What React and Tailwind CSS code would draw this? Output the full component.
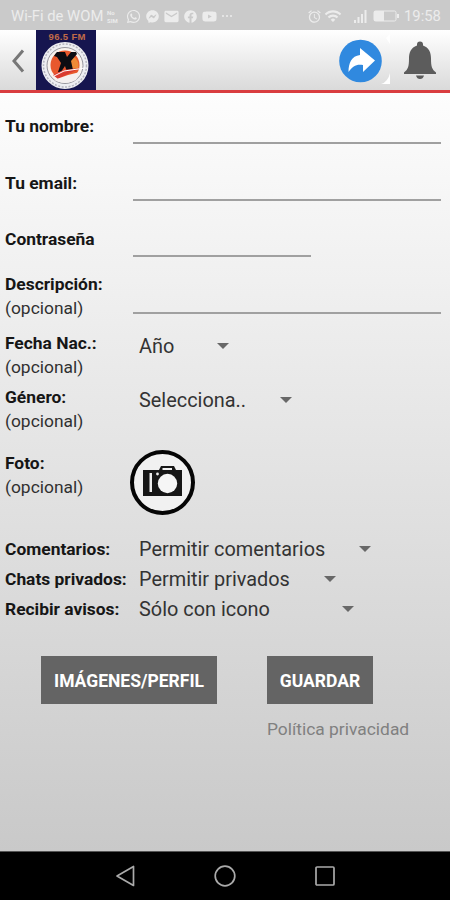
import { FaWhatsapp, FaFacebookMessenger, FaFacebook, FaYoutube } from "react-icons/fa";
import { MdEmail, MdAlarm, MdWifi } from "react-icons/md";

function StatusBar() {
  return (
    <div className="flex h-[30px] items-center bg-[#cacaca] pt-[2px] pl-[11px] pr-[9px] text-[#ececec]">
      <span className="w-[95px] whitespace-nowrap text-[14.8px]">Wi-Fi de WOM</span>
      <span className="flex w-[18px] flex-col gap-px pl-px text-[6px] leading-[7px] font-bold">
        <span>No</span>
        <span>SIM</span>
      </span>
      <div className="ml-[2px] flex items-center">
        <FaWhatsapp size={15} />
        <FaFacebookMessenger size={13} className="ml-[5px]" />
        <MdEmail size={17} className="ml-[4px]" />
        <FaFacebook size={13} className="ml-[4px]" />
        <FaYoutube size={15} className="ml-[5px]" />
      </div>
      <svg width="12" height="4" viewBox="0 0 12 4" className="ml-[4px]" fill="currentColor">
        <circle cx="2" cy="2" r="1" />
        <circle cx="6" cy="2" r="1" />
        <circle cx="10" cy="2" r="1" />
      </svg>
      <div className="ml-auto flex items-center">
        <MdAlarm size={15} />
        <MdWifi size={18} className="ml-[2px]" />
        <svg width="14" height="14" viewBox="0 0 14 14" className="ml-[12px]" fill="currentColor">
          <path d="M0 11h2v3H0zM3.5 8h2v6h-2zM7 5h2v9H7zM10.5 1h2v13h-2z" />
        </svg>
        <svg width="27" height="12" viewBox="0 0 27 12" className="ml-[5px]">
          <rect x="1" y="1" width="22" height="10" rx="1.5" fill="none" stroke="currentColor" strokeWidth="1" />
          <rect x="1" y="1" width="10" height="10" fill="currentColor" />
          <rect x="24" y="4" width="2" height="4" fill="currentColor" />
        </svg>
        <span className="ml-[4px] w-[37px] whitespace-nowrap text-[14.8px]">19:58</span>
      </div>
    </div>
  );
}

function StationLogo() {
  return (
    <svg width="60" height="60" viewBox="0 0 60 60" className="ml-[11px]">
      <rect width="60" height="60" fill="#16154f" />
      <text x="31" y="10" textAnchor="middle" fontSize="9.5" fontWeight="700" fill="#c06a48" textLength="37" fontFamily="Liberation Sans, sans-serif">96.5 FM</text>
      <circle cx="29" cy="35.500" r="23.500" fill="#eeeef2" />
      <circle cx="29" cy="35.500" r="21.500" fill="none" stroke="#b4b4be" strokeWidth="1.500" strokeDasharray="2 1.500" />
      <circle cx="29" cy="35.500" r="18" fill="#f8f3ef" stroke="#6e6e7a" strokeWidth="0.700" />
      <circle cx="29" cy="35" r="14.500" fill="#e8582d" />
      <path d="M33 26c7 0 11 6 9 13l-9-1z" fill="#ef8a37" />
      <path d="M21 22h8l2 5 4-5h5l1 2-6 7 2 9-6 2-2-6-4 6h-3l3-9-4-6-3-1 2-3z" fill="#0c0c12" />
      <path d="M17 45l10-5 18-2-11 5-12 6z" fill="#d93a31" />
      <path d="M18 46l10-5 21-3" fill="none" stroke="#fff" strokeWidth="1" />
      <path d="M18 50q11 6 22 0l4-8-12 3z" fill="#f5f0f0" />
    </svg>
  );
}

function Header() {
  return (
    <header className="flex h-[63px] items-start border-b-[3px] border-[#d93d3f] bg-linear-to-b from-white to-[#dadada]">
      <svg width="14" height="60" viewBox="0 0 14 60" className="ml-[11px]" fill="none" stroke="#777" strokeWidth="3">
        <path d="M12 20.500L3 31l9 10.500" />
      </svg>
      <StationLogo />
      <div className="ml-auto flex">
        <svg width="52" height="60" viewBox="0 0 52 60">
          <circle cx="21.500" cy="31" r="21.300" fill="#3089df" />
          <path d="M21 18l15 12.500-12 11.500v-7c-7-1-10 1-14.500 7 0-9 3-16 11.500-17z" fill="#fff" />
          <path d="M51 43v11h-9q7-2 9-11zM51 4v10l-4-6z" fill="#fff" />
        </svg>
        <svg width="34" height="60" viewBox="0 0 34 60" className="mr-[13px] ml-[12px]" fill="#5c5c5c">
          <path d="M17 11.500a3 3 0 0 1 3 3v1c6 2 8 7 8 13 0 8 1 11 5 14v1.500H1v-1.500c4-3 5-6 5-14 0-6 2-11 8-13v-1a3 3 0 0 1 3-3z" />
          <path d="M13 45.500h8q-1 3.500-4 3.500t-4-3.500z" />
        </svg>
      </div>
    </header>
  );
}

function Label({ text, optional }) {
  return (
    <div className="w-[128px] shrink-0 pl-[5px] text-[17.4px] leading-[24px] text-[#161616]">
      <div className="font-bold whitespace-nowrap">{text}</div>
      {optional && <div className="text-[#303030]">(opcional)</div>}
    </div>
  );
}

function Field({ label, optional, rowClass, lineClass }) {
  return (
    <div className={"flex " + rowClass}>
      <Label text={label} optional={optional} />
      <input className={"ml-[5px] border-b-2 border-[#a0a0a0] bg-transparent outline-none " + lineClass} />
    </div>
  );
}

function Picker({ value, widthClass }) {
  return (
    <div className={"ml-[11px] flex h-[30px] items-center justify-between text-[19.9px] text-[#333] " + widthClass}>
      <span className="pt-[2px] whitespace-nowrap">{value}</span>
      <svg width="12" height="6" viewBox="0 0 12 6" fill="#686868">
        <path d="M0 0h12L6 6z" />
      </svg>
    </div>
  );
}

function NavigationBar() {
  return (
    <nav className="flex h-[49px] items-center justify-between border-t border-[#555] bg-black pr-[114px] pl-[115px]">
      <svg width="20" height="22" viewBox="0 0 20 22" fill="none" stroke="#aaa" strokeWidth="1.700" strokeLinejoin="round">
        <path d="M18.500 1.500v19L2 11z" />
      </svg>
      <svg width="22" height="22" viewBox="0 0 22 22" fill="none" stroke="#aaa" strokeWidth="1.700">
        <circle cx="11" cy="11" r="9.800" />
      </svg>
      <svg width="22" height="22" viewBox="0 0 22 22" fill="none" stroke="#aaa" strokeWidth="1.700">
        <rect x="2" y="2" width="18" height="18" rx="1" />
      </svg>
    </nav>
  );
}

export default function App() {
  return (
    <div className="flex h-[900px] w-[450px] flex-col overflow-hidden font-['Roboto',sans-serif]">
      <StatusBar />
      <Header />
      <main className="flex flex-1 flex-col bg-linear-to-b from-[#fdfdfd] to-[#c9c9c9] pt-[21px]">
        <Field label="Tu nombre:" rowClass="h-[57px]" lineClass="h-[30px] w-[308px]" />
        <Field label="Tu email:" rowClass="h-[56px]" lineClass="h-[30px] w-[308px]" />
        <Field label="Contraseña" rowClass="h-[45px]" lineClass="h-[30px] w-[178px]" />
        <Field label="Descripción:" optional rowClass="h-[59px]" lineClass="h-[42px] w-[308px]" />
        <div className="flex h-[54px]">
          <Label text="Fecha Nac.:" optional />
          <Picker value="Año" widthClass="w-[90px]" />
        </div>
        <div className="flex h-[66px]">
          <Label text="Género:" optional />
          <Picker value="Selecciona.." widthClass="w-[153px]" />
        </div>
        <div className="flex h-[83px]">
          <Label text="Foto:" optional />
          <svg width="66" height="66" viewBox="0 0 66 66" className="-mt-px ml-[2px]">
            <circle cx="32.500" cy="32.500" r="30.500" fill="#f1f1f1" stroke="#050505" strokeWidth="4" />
            <path d="M13 20h16l2-4h13l2 4h6v26H13z" fill="#171717" />
            <rect x="32.500" y="18" width="9.500" height="2" fill="#f1f1f1" />
            <rect x="19.500" y="23" width="2.500" height="19" fill="#eee" />
            <circle cx="27.500" cy="24" r="1.400" fill="#eee" />
            <circle cx="37.500" cy="33.500" r="9.700" fill="#f6f6f6" />
          </svg>
        </div>
        <div className="flex h-[30px] items-center">
          <Label text="Comentarios:" />
          <Picker value="Permitir comentarios" widthClass="w-[232px]" />
        </div>
        <div className="flex h-[30px] items-center">
          <Label text="Chats privados:" />
          <Picker value="Permitir privados" widthClass="w-[197px]" />
        </div>
        <div className="flex h-[30px] items-center">
          <Label text="Recibir avisos:" />
          <Picker value="Sólo con icono" widthClass="w-[215px]" />
        </div>
        <div className="mt-[32px] flex h-[48px] pl-[41px] text-[17.5px] font-bold text-white">
          <button className="w-[176px] bg-[#646464] pt-[2px]">IMÁGENES/PERFIL</button>
          <button className="ml-[50px] w-[106px] bg-[#646464] pt-[2px]">GUARDAR</button>
        </div>
        <a className="mt-[13px] pl-[267px] text-[17.4px] leading-[24px] text-[#808080]">Política privacidad</a>
      </main>
      <NavigationBar />
    </div>
  );
}
